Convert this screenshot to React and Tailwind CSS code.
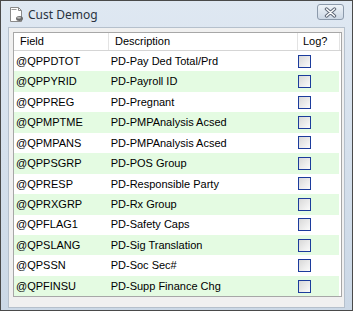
import React from "react";

const rows = [
  ["@QPPDTOT", "PD-Pay Ded Total/Prd"],
  ["@QPPYRID", "PD-Payroll ID"],
  ["@QPPREG", "PD-Pregnant"],
  ["@QPMPTME", "PD-PMPAnalysis Acsed"],
  ["@QPMPANS", "PD-PMPAnalysis Acsed"],
  ["@QPPSGRP", "PD-POS Group"],
  ["@QPRESP", "PD-Responsible Party"],
  ["@QPRXGRP", "PD-Rx Group"],
  ["@QPFLAG1", "PD-Safety Caps"],
  ["@QPSLANG", "PD-Sig Translation"],
  ["@QPSSN", "PD-Soc Sec#"],
  ["@QPFINSU", "PD-Supp Finance Chg"],
];

function DocIcon() {
  return (
    <svg width="17" height="17" viewBox="0 0 17 17">
      <path d="M2.5 1.5h8l3 3v11h-11z" fill="#fff" stroke="#8a8a8a" />
      <path d="M10.5 1.5v3h3" fill="none" stroke="#8a8a8a" />
      <rect x="3.5" y="3" width="5" height="1" fill="#9a9a9a" />
      <ellipse cx="11.5" cy="12.5" rx="3.5" ry="2.5" fill="#6a6a6a" />
      <ellipse cx="11" cy="11.8" rx="2" ry="1" fill="#bbb" />
    </svg>
  );
}

export default function App() {
  return (
    <div className="w-[353px] h-[311px] border border-[#4a4a4a] bg-gradient-to-b from-[#dfe8f2] to-[#cbd8e6] flex flex-col">
      <div className="h-[26px] flex items-center pl-[7px] pr-[8px] shrink-0">
        <DocIcon />
        <span
          className="ml-[3px] text-[12px] text-[#2a3340] leading-none mt-[1px]"
          style={{ fontFamily: '"Noto Sans", "Open Sans", sans-serif' }}
        >
          Cust Demog
        </span>
        <div className="ml-auto mb-[4px] w-[27px] h-[16px] rounded-[3px] border border-[#8c9aab] bg-gradient-to-b from-[#eef3f8] to-[#cdd8e5] flex items-center justify-center">
          <svg width="13" height="11" viewBox="0 0 13 11">
            <path d="M2.5 2l8 7M10.5 2l-8 7" stroke="#5f6877" strokeWidth="3.4" strokeLinecap="round" />
            <path d="M2.5 2l8 7M10.5 2l-8 7" stroke="#ffffff" strokeWidth="1.4" strokeLinecap="round" />
          </svg>
        </div>
      </div>
      <div className="flex-1 mx-[7px] mb-[3px] bg-[#f0f0f0] border border-[#b5c0cc] pt-[4px] pl-[4px] pr-[2px] pb-[10px] flex flex-col">
        <div
          className="flex-1 border border-[#a7a7a7] bg-white text-[11px] text-black"
          style={{ fontFamily: '"Liberation Sans", Arial, sans-serif' }}
        >
          <div className="flex h-[18px] items-center border-b border-[#d5d5d5] bg-white">
            <div className="w-[95px] pl-[6px] border-r border-[#e3e3e3] h-full flex items-center">Field</div>
            <div className="w-[189px] pl-[6px] border-r border-[#e3e3e3] h-full flex items-center">Description</div>
            <div className="w-[42px] pl-[5px] border-r border-[#e3e3e3] h-full flex items-center">Log?</div>
          </div>
          {rows.map(([f, d], i) => (
            <div
              key={f}
              className={"flex h-[20.45px] items-center mr-[2px] " + (i % 2 === 1 ? "bg-[#e4fbe2]" : "bg-white")}
            >
              <div className="w-[95px] pl-[2px]">{f}</div>
              <div className="w-[189px] pl-[2px]">{d}</div>
              <div className="w-[42px] pl-[1px] flex items-center">
                <div className="w-[13px] h-[13px] border border-[#1c3c9c] bg-gradient-to-br from-[#d8d8d8] to-[#fbfbfb]" />
              </div>
            </div>
          ))}
        </div>
      </div>
    </div>
  );
}
